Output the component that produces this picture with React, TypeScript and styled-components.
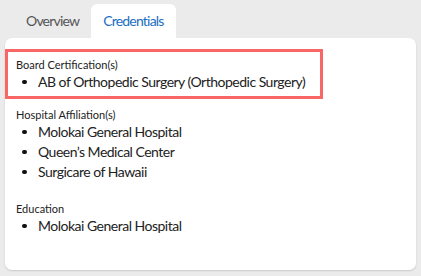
import React from "react";
import styled, { createGlobalStyle } from "styled-components";

const GlobalStyle = createGlobalStyle`
  html, body {
    margin: 0;
    padding: 0;
    background: #ebebeb;
  }
  body {
    font-family: Lato, "Noto Sans", sans-serif;
    color: #222;
  }
`;

const Page = styled.div`
  width: 421px;
  height: 276px;
  box-sizing: border-box;
  padding: 4px 5px 6px 5px;
  display: flex;
  flex-direction: column;
`;

const TabBar = styled.div`
  display: flex;
  padding-left: 9px;
`;

const Tab = styled.div<{ $active?: boolean }>`
  height: 34px;
  line-height: 34px;
  padding: 0 12px;
  font-size: 14px;
  letter-spacing: -0.8px;
  color: ${({ $active }) => ($active ? "#1b6ec2" : "#555")};
  background: ${({ $active }) => ($active ? "#fff" : "transparent")};
  border-radius: 6px 6px 0 0;
`;

const Panel = styled.div`
  flex: 1;
  background: #fff;
  border-radius: 7px;
  box-shadow: 0 1px 2px rgba(0, 0, 0, 0.14);
  padding-top: 11px;
`;

const Section = styled.section<{ $highlight?: boolean }>`
  width: 312px;
  border: 3px solid ${({ $highlight }) => ($highlight ? "#f96666" : "transparent")};
  padding: 6px 0 4px 0;
  margin-bottom: ${({ $highlight }) => ($highlight ? "0" : "4px")};
`;

const Label = styled.div`
  font-size: 11px;
  line-height: 14px;
  padding-left: 8px;
`;

const List = styled.ul`
  list-style: none;
  margin: 0;
  padding: 0 0 0 14px;
`;

const Item = styled.li`
  display: flex;
  align-items: center;
  font-size: 14px;
  line-height: 20px;
  letter-spacing: -0.5px;
  white-space: nowrap;
  &::before {
    content: "";
    width: 4.5px;
    height: 4.5px;
    border-radius: 50%;
    background: #111;
    margin: 0 11.5px 0 0;
    flex: none;
  }
`;

const sections = [
  {
    label: "Board Certification(s)",
    items: ["AB of Orthopedic Surgery (Orthopedic Surgery)"],
    highlight: true,
  },
  {
    label: "Hospital Affiliation(s)",
    items: ["Molokai General Hospital", "Queen’s Medical Center", "Surgicare of Hawaii"],
  },
  {
    label: "Education",
    items: ["Molokai General Hospital"],
  },
];

const App = () => {
  return (
    <Page>
      <GlobalStyle />
      <TabBar>
        <Tab>Overview</Tab>
        <Tab $active>Credentials</Tab>
      </TabBar>
      <Panel>
        {sections.map((s) => (
          <Section key={s.label} $highlight={s.highlight}>
            <Label>{s.label}</Label>
            <List>
              {s.items.map((item) => (
                <Item key={item}>{item}</Item>
              ))}
            </List>
          </Section>
        ))}
      </Panel>
    </Page>
  );
};

export default App;
